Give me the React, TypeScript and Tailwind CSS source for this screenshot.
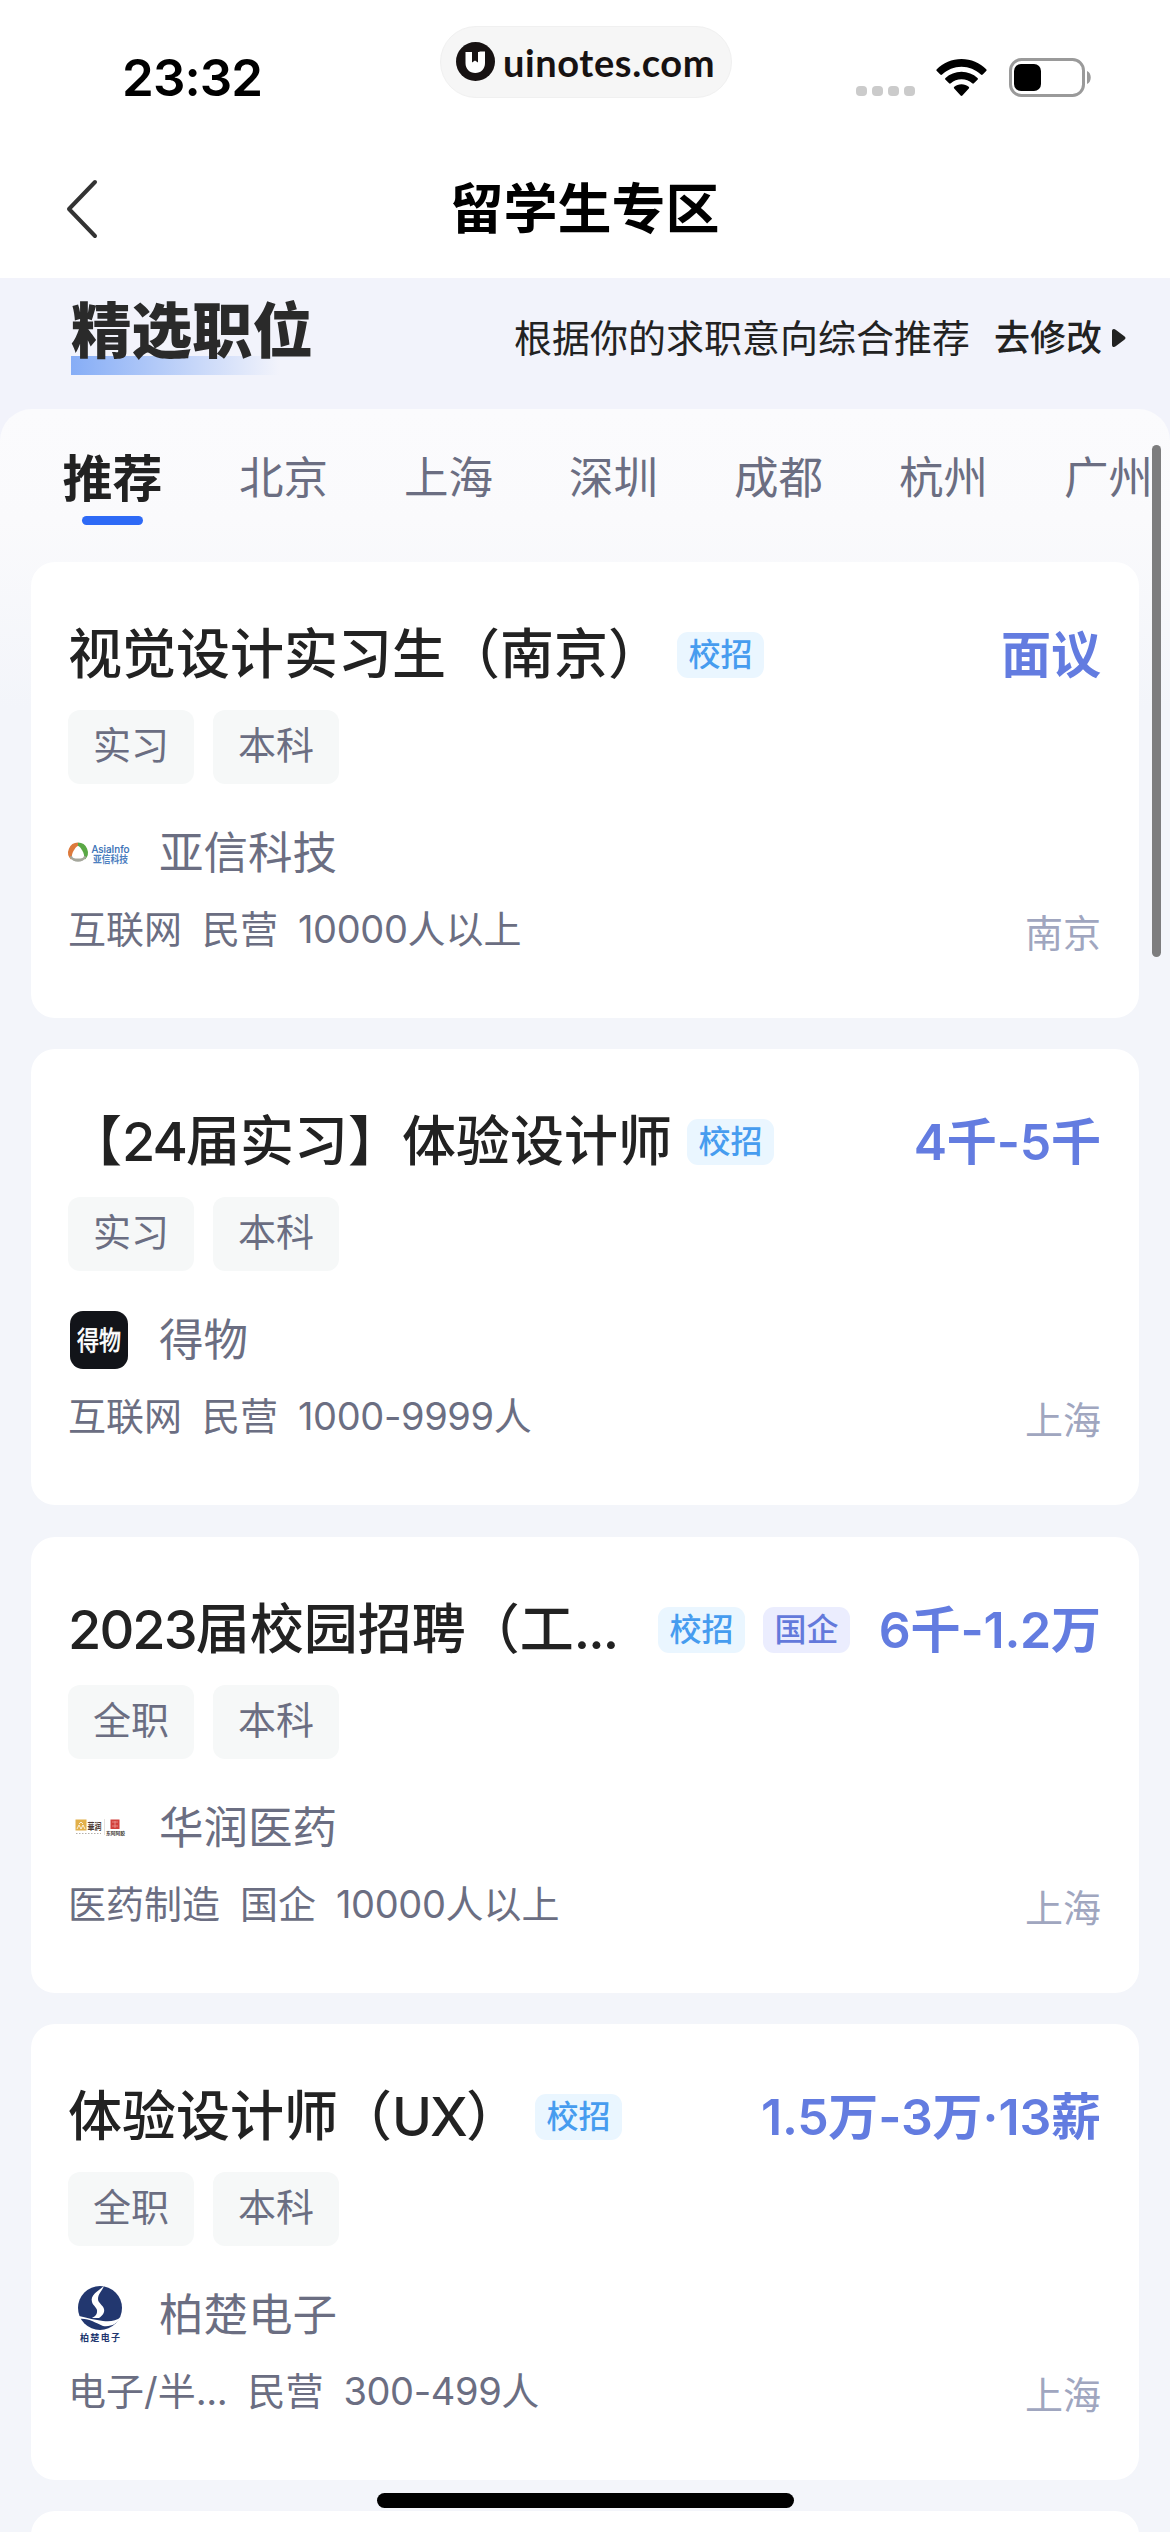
import type { ReactNode } from "react";
import { clsx } from "clsx";

type Job = {
  title: string;
  badges: string[];
  salary: string;
  tags: string[];
  company: string;
  logo: ReactNode;
  info: string[];
  city: string;
};

const AsiaInfoLogo = () => (
  <svg className="overflow-visible" width="62" height="60" viewBox="0 0 62 60" fill="none">
    <path d="M10 19.500a10 10 0 0 0-7 17l7-7z" fill="#dd7a3c" />
    <path d="M10 19.500a10 10 0 0 1 7 17l-7-7z" fill="#5aa845" />
    <path d="M1.500 34a10 10 0 0 0 17 0L10 29z" fill="#a5a79c" />
    <path d="M10 23c2 0 5.500 6 6 9 .3 3-2.500 3.500-6 3.500S3.700 35 4 32c.5-3 4-9 6-9z" fill="#fff" />
    <text x="23.500" y="29.500" fontSize="10" textLength="38" lengthAdjust="spacingAndGlyphs" fill="#2b67b2" stroke="#2b67b2" strokeWidth=".2">AsiaInfo</text>
    <text x="25" y="39.500" fontSize="10" fontWeight="700" textLength="35" lengthAdjust="spacingAndGlyphs" fill="#4d80c0">亚信科技</text>
  </svg>
);

const DewuLogo = () => (
  <svg className="overflow-visible" width="62" height="60" viewBox="0 0 62 60">
    <rect x="2" y="1" width="58" height="58" rx="13" fill="#121419" />
    <text x="9" y="39.500" fontSize="26" fontWeight="400" textLength="44" lengthAdjust="spacingAndGlyphs" fill="#fff" stroke="#fff" strokeWidth=".7">得物</text>
  </svg>
);

const CrPharmaLogo = () => (
  <svg width="62" height="60" viewBox="0 0 62 60" fill="none">
    <rect x="7.500" y="21.500" width="11" height="11" fill="#e2b04a" />
    <path d="M9 31l2-4 2 4 2-4 2 4M11 26l2-2 2 2" stroke="#fff" strokeWidth=".8" />
    <text x="19.500" y="31.500" fontSize="9" fontWeight="700" textLength="14" lengthAdjust="spacingAndGlyphs" fill="#4a3a32">華润</text>
    <path d="M8 35.500h25" stroke="#b5b0aa" strokeWidth="1" strokeDasharray="1.500 1.500" />
    <path d="M36.500 21v16" stroke="#d8d4d0" strokeWidth=".7" />
    <rect x="42.500" y="21.500" width="9" height="9.500" fill="#d2413c" />
    <path d="M44 24h6M44 28h6M47 23v7" stroke="#efa7a2" strokeWidth=".7" />
    <text x="38" y="37" fontSize="5" fontWeight="700" textLength="19" lengthAdjust="spacingAndGlyphs" fill="#3b3532">东阿阿胶</text>
  </svg>
);

const BochuLogo = () => (
  <svg width="62" height="60" viewBox="0 0 62 60">
    <circle cx="32" cy="23" r="22" fill="#22376f" />
    <path d="M36 1c-6 5-14 9-12 16 1 4 6 6 5 10 0 3-3 5-5 6h7c3-2 6-5 5-9-1-4-6-6-6-10 0-5 4-8 6-13z" fill="#fff" />
    <path d="M11 31c9 2 16 4 24 5 7 1 13 0 18-4-4 7-10 10-18 9-8-3-14-8-24-7z" fill="#fff" />
    <text x="12" y="56" fontSize="9" fontWeight="700" textLength="40" lengthAdjust="spacing" fill="#22376f">柏楚电子</text>
  </svg>
);

const jobs: Job[] = [
  {
    title: "视觉设计实习生（南京）",
    badges: ["校招"],
    salary: "面议",
    tags: ["实习", "本科"],
    company: "亚信科技",
    logo: <AsiaInfoLogo />,
    info: ["互联网", "民营", "10000人以上"],
    city: "南京",
  },
  {
    title: "【24届实习】体验设计师",
    badges: ["校招"],
    salary: "4千-5千",
    tags: ["实习", "本科"],
    company: "得物",
    logo: <DewuLogo />,
    info: ["互联网", "民营", "1000-9999人"],
    city: "上海",
  },
  {
    title: "2023届校园招聘（工...",
    badges: ["校招", "国企"],
    salary: "6千-1.2万",
    tags: ["全职", "本科"],
    company: "华润医药",
    logo: <CrPharmaLogo />,
    info: ["医药制造", "国企", "10000人以上"],
    city: "上海",
  },
  {
    title: "体验设计师（UX）",
    badges: ["校招"],
    salary: "1.5万-3万·13薪",
    tags: ["全职", "本科"],
    company: "柏楚电子",
    logo: <BochuLogo />,
    info: ["电子/半...", "民营", "300-499人"],
    city: "上海",
  },
];

const cities = ["北京", "上海", "深圳", "成都", "杭州", "广州"];

// Latin runs are set a little tighter than the Chinese around them
function MixedText({ text, className }: { text: string; className: string }) {
  return text.split(/([0-9A-Za-z.-]+)/).map((part, i) =>
    i % 2 ? (
      <span key={i} className={className}>
        {part}
      </span>
    ) : (
      part
    )
  );
}

function StatusBar() {
  return (
    <div className="flex h-[140px] shrink-0 items-start">
      <div className="w-[440px] pt-[47px] pl-[122px] text-[51px] leading-[62px] font-semibold tracking-[-0.9px] text-black">23:32</div>
      <div className="mt-[26px] flex h-[72px] w-[292px] items-center rounded-full border border-[#f0f0f0] bg-[#f6f6f6] pl-[15px]">
        <svg className="-mt-[1px]" width="39" height="39" viewBox="0 0 39 39">
          <circle cx="19.500" cy="19.500" r="19.500" fill="#171212" />
          <path d="M9.500 10h6.500v10.500l3-2 3 2V10h1.500v-.5h5.500V21c0 6-4 10-9.700 10S9.500 27 9.500 21z" fill="#fff" />
        </svg>
        <span className="ml-2 font-['Lato'] text-[38px] leading-[48px] font-bold tracking-[0.6px] text-[#171212]">uinotes.com</span>
      </div>
      <div className="flex pt-[58px] pl-[124px]">
        <div className="mt-7 flex h-[10px] gap-[5px]">
          {[0, 1, 2, 3].map((i) => (
            <span key={i} className="h-[10px] w-[11px] rounded-[4px] bg-[#cbcbcb]" />
          ))}
        </div>
        <svg className="ml-[21px]" width="51" height="39" viewBox="0 0 51 39">
          <path d="M25.500 1C16 1 7 5 .8 11.300c-.6.6-.6 1.200 0 1.800l3.500 3.500c.6.6 1.200.6 1.800 0C11.500 11.500 18 8.700 25.500 8.700s14 2.800 19.400 7.900c.6.6 1.200.6 1.800 0l3.500-3.500c.6-.6.6-1.200 0-1.800C44 5 35 1 25.500 1z" />
          <path d="M25.500 13.700c-6.200 0-11.700 2.300-16 6.200-.6.600-.6 1.200 0 1.800l3.600 3.600c.5.500 1.100.5 1.700 0 3-2.600 6.500-4 10.700-4s7.700 1.400 10.700 4c.6.5 1.200.5 1.700 0l3.600-3.600c.6-.6.6-1.200 0-1.800-4.300-3.900-9.800-6.200-16-6.200z" />
          <path d="M25.500 26.200c-2.800 0-5.300 1-7.200 2.500-.6.500-.6 1.200-.1 1.700l6.400 7.200c.6.600 1.200.6 1.800 0l6.400-7.200c.5-.5.5-1.200-.1-1.700-1.900-1.500-4.400-2.500-7.200-2.500z" />
        </svg>
        <svg className="ml-[22px]" width="83" height="39" viewBox="0 0 83 39">
          <rect x="1.500" y="1.500" width="73" height="36" rx="11" fill="none" stroke="#9a9a9a" strokeWidth="3" />
          <rect x="5" y="6" width="27" height="27" rx="7" />
          <path d="M78 13c5 2 5 11 0 13z" fill="#9a9a9a" />
        </svg>
      </div>
    </div>
  );
}

function JobCard({ job }: { job: Job }) {
  return (
    <div className="h-[456px] shrink-0 rounded-[24px] bg-white pt-[66px] pr-[38px] pl-[37px]">
      <div className="flex h-[54px] items-center whitespace-nowrap">
        <h2 className={clsx("mr-[15px] text-[54px] leading-[54px] font-medium text-[#222]", job.badges.length > 1 && "w-[575px]")}>
          <MixedText text={job.title} className="tracking-[-0.035em]" />
        </h2>
        <div className="flex gap-[18px]">
          {job.badges.map((badge) => (
            <span
              key={badge}
              className={clsx(
                "flex h-[46px] w-[87px] items-center justify-center rounded-[11px] text-[32px] font-medium",
                badge === "国企" ? "bg-[#ebedfe] text-[#6379db]" : "bg-[#eaf6ff] text-[#469cef]"
              )}
            >
              {badge}
            </span>
          ))}
        </div>
        <span className="ml-auto text-[50px] leading-[54px] font-semibold text-[#637ce0]">
          <MixedText text={job.salary} className="tracking-[-0.005em]" />
        </span>
      </div>

      <div className="mt-[28px] flex gap-[19px]">
        {job.tags.map((tag) => (
          <span key={tag} className="flex h-[74px] w-[126px] justify-center rounded-[12px] bg-[#f6f8f8] text-[38px] leading-[70px] text-[#6b6e82]">
            {tag}
          </span>
        ))}
      </div>

      <div className="mt-[39px] flex h-[60px] items-center">
        {job.logo}
        <span className="ml-[29px] text-[44.500px] leading-[60px] text-[#6b6e82]">{job.company}</span>
      </div>

      <div className="mt-[24px] flex h-[44px] text-[38px] leading-[44px] text-[#6b6e82]">
        <div className="flex gap-[20px]">
          {job.info.map((item) => (
            <span key={item}>
              <MixedText text={item} className="tracking-[-0.01em]" />
            </span>
          ))}
        </div>
        <span className="ml-auto pt-1 text-[#a0a6bf]">{job.city}</span>
      </div>
    </div>
  );
}

export default function App() {
  return (
    <div className="relative flex h-[2532px] w-[1170px] flex-col overflow-hidden bg-white font-['Inter','Noto_Sans_CJK_SC',sans-serif]">
      <StatusBar />

      {/* Nav bar */}
      <div className="flex h-[138px] shrink-0 items-center px-[65px]">
        <svg width="34" height="62" viewBox="0 0 34 62" fill="none" stroke="#333" strokeWidth="4" strokeLinecap="round" strokeLinejoin="round">
          <path d="M30 4L4 31l26 27" />
        </svg>
        <h1 className="flex-1 pt-[2px] pr-[35px] text-center text-[54px] leading-[60px] font-semibold text-black">留学生专区</h1>
      </div>

      <div className="flex min-h-0 flex-1 flex-col bg-[#f2f3fb]">
        {/* Section heading */}
        <div className="flex h-[131px] shrink-0 items-start pl-[71px]">
          <div className="mt-[21px] bg-[linear-gradient(90deg,#86adf6,#f2f3fb)] bg-[length:208px_19px] bg-[position:0_bottom] bg-no-repeat pb-[11px]">
            <h2 className="text-[60.500px] leading-[65px] font-black text-[#2a2a2a]">精选职位</h2>
          </div>
          <div className="mt-[38px] ml-auto flex items-center pr-[44px] leading-[44px] text-[#222]">
            <span className="text-[38px]">根据你的求职意向综合推荐</span>
            <span className="ml-[24px] text-[36px] font-medium">去修改</span>
            <svg className="ml-[9px]" width="15" height="20" viewBox="0 0 15 20" fill="#222">
              <path d="M1 3c0-2 2-3 4-1l8 6c2 1 2 3 0 4l-8 6c-2 2-4 1-4-1z" />
            </svg>
          </div>
        </div>

        <div className="flex min-h-0 flex-1 flex-col rounded-t-[32px] bg-[linear-gradient(180deg,#fbfbfd_0px,#fafafc_110px,#f3f5fa_300px)]">
          {/* City tabs */}
          <div className="flex h-[153px] shrink-0 gap-[76px] overflow-hidden pt-[40px] pl-[62px] whitespace-nowrap">
            <div className="flex w-[101px] flex-col items-center">
              <span className="text-[50px] leading-[60px] font-semibold text-[#222]">推荐</span>
              <span className="mt-[7px] h-[9px] w-[61px] rounded-full bg-[#2e6af6]" />
            </div>
            {cities.map((city) => (
              <span key={city} className="w-[89px] shrink-0 text-[44.500px] leading-[58px] text-[#6b6e82]">
                {city}
              </span>
            ))}
          </div>

          <div className="flex flex-col gap-[31.300px] px-[31px]">
            {jobs.map((job) => (
              <JobCard key={job.title} job={job} />
            ))}
            <div className="h-[60px] rounded-t-[24px] bg-white" />
          </div>
        </div>
      </div>

      {/* Scroll thumb */}
      <div className="absolute top-[445px] right-[9px] h-[512px] w-[9px] rounded-full bg-[#7d7d7e]" />
      {/* Home indicator */}
      <div className="absolute bottom-[24px] left-[377px] h-[15px] w-[417px] rounded-full bg-black" />
    </div>
  );
}
